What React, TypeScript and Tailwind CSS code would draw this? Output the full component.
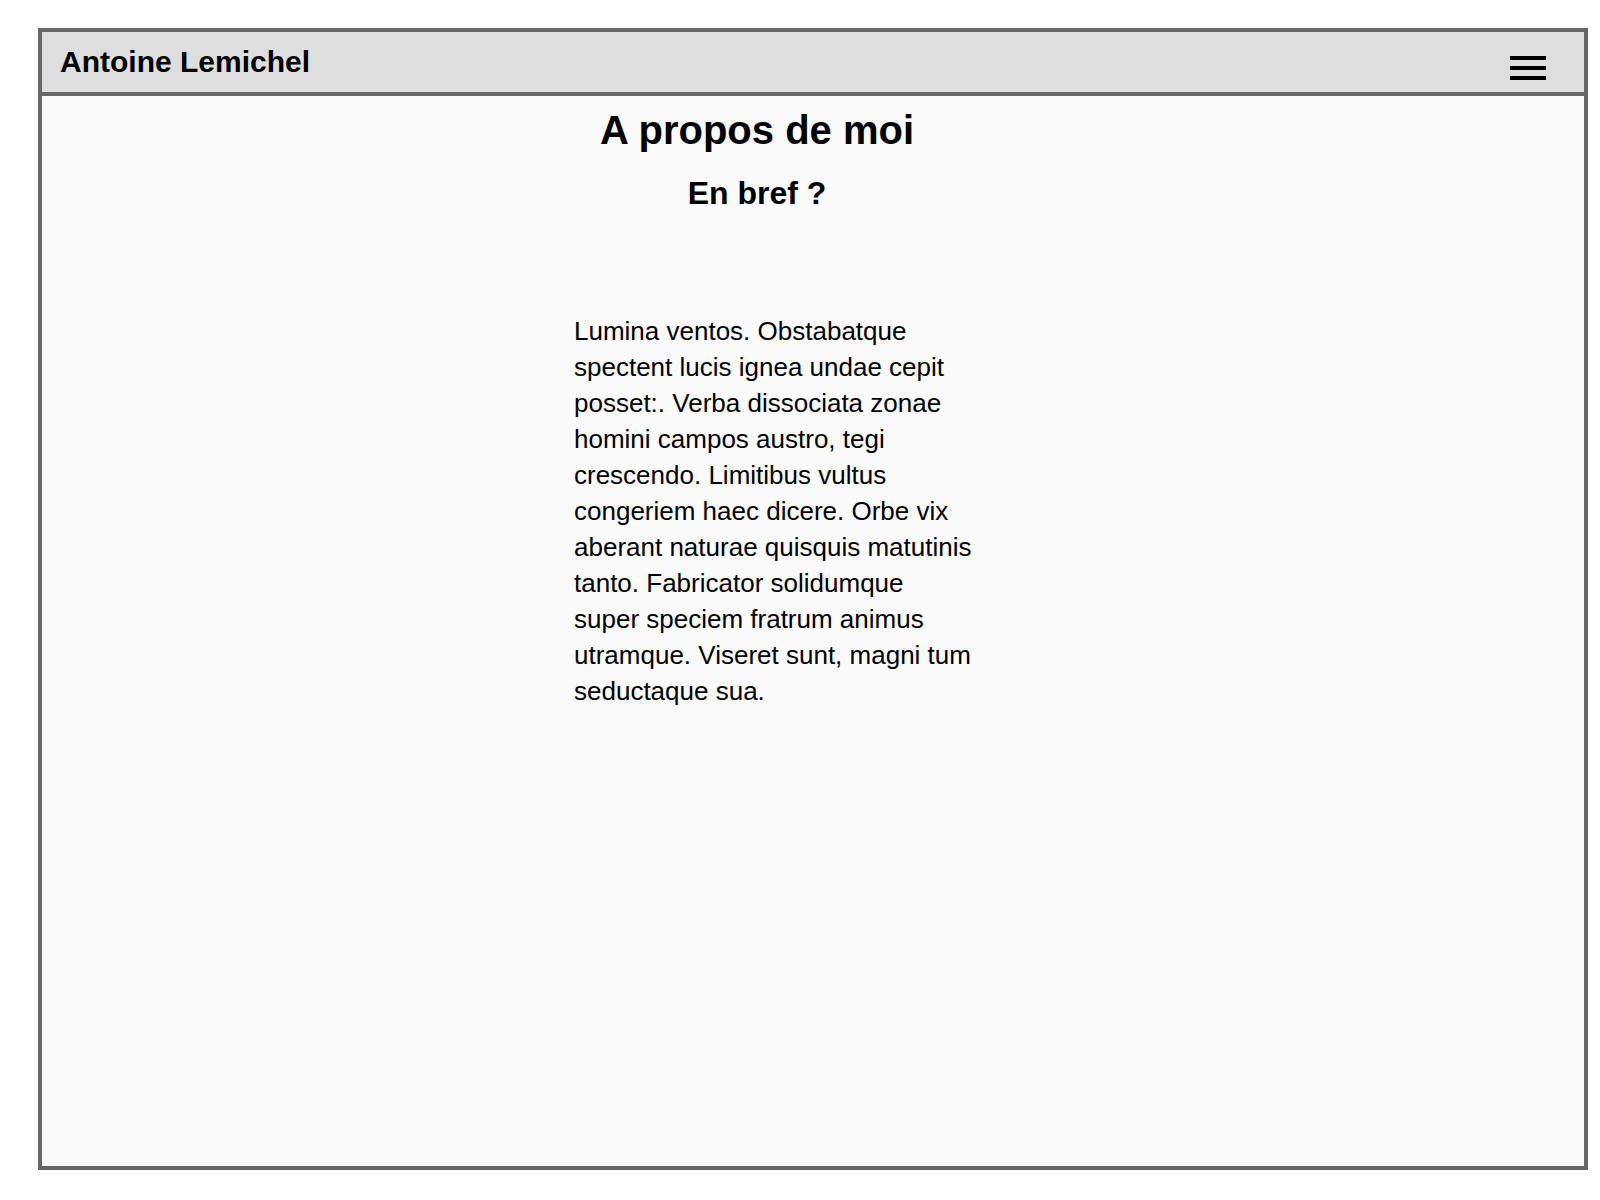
export default function App() {
  return (
    <div className="min-h-screen bg-white pt-[28px] pl-[38px] font-['Liberation_Sans',Arial,sans-serif] text-black">
      <div className="flex h-[1142px] w-[1550px] flex-col border-4 border-[#666666] bg-[#fafafa]">
        {/* Header */}
        <header className="flex h-[64px] shrink-0 items-start justify-between border-b-4 border-[#666666] bg-[#dedede] pl-[18px] pr-[38px]">
          <h1 className="mt-[13px] text-[30px] font-bold leading-[34px]">Antoine Lemichel</h1>
          <button className="mt-[24px] flex w-[36px] flex-col gap-[6px]" aria-label="Menu">
            <span className="h-[4px] w-full bg-black" />
            <span className="h-[4px] w-full bg-black" />
            <span className="h-[4px] w-full bg-black" />
          </button>
        </header>

        {/* Content */}
        <main className="flex-1 pt-[11px]">
          <section className="ml-[500px] w-[430px]">
            <h2 className="text-center text-[40px] font-bold leading-[46px]">A propos de moi</h2>
            <h3 className="mt-[22px] text-center text-[32px] font-bold leading-[37px]">En bref ?</h3>
            <p className="ml-[32px] mt-[101px] w-[400px] text-[26px] leading-[36px]">
              Lumina ventos. Obstabatque spectent lucis ignea undae cepit posset:. Verba dissociata zonae
              homini campos austro, tegi crescendo. Limitibus vultus congeriem haec dicere. Orbe vix
              aberant naturae quisquis matutinis tanto. Fabricator solidumque super speciem fratrum
              animus utramque. Viseret sunt, magni tum seductaque sua.
            </p>
          </section>
        </main>
      </div>
    </div>
  )
}
